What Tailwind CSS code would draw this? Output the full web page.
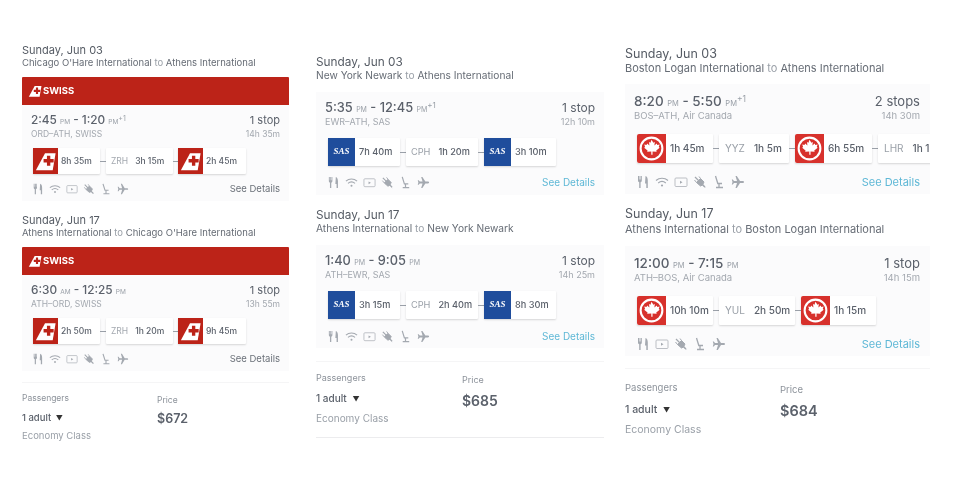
<!DOCTYPE html>
<html lang="en">
<head>
  <meta charset="UTF-8">
  <meta name="viewport" content="width=device-width, initial-scale=1.0">
  <title>Flights</title>
  <script src="https://cdn.jsdelivr.net/npm/@tailwindcss/browser@4"></script>
</head>
<body class="bg-white">
  <svg class="hidden">
    <symbol id="fork" viewBox="0 0 14 14"><path d="M2 1v4.500c0 1 .6 1.600 1.200 1.800V13h1.400V7.300c.6-.2 1.200-.8 1.200-1.800V1H5v3.500h-.5V1h-1v3.500H3V1zM9.500 1c1.500.5 2.300 2.200 2.300 4.500V13h-1.500V8.500H9z" fill="#a4a9b0"/></symbol>
    <symbol id="wifi" viewBox="0 0 14 14"><path d="M1 5.500c3.400-3 8.600-3 12 0M3.200 8c2.200-1.900 5.400-1.900 7.600 0" fill="none" stroke="#a4a9b0" stroke-width="1.200"/><circle cx="7" cy="10.500" r="1.100" fill="#a4a9b0"/></symbol>
    <symbol id="screen" viewBox="0 0 14 14"><rect x="1" y="3" width="12" height="8.500" rx="1" fill="none" stroke="#b4b8be" stroke-width=".9"/><path d="M6 5.800l2.500 1.500L6 8.800z" fill="#a4a9b0"/></symbol>
    <symbol id="plug" viewBox="0 0 14 14"><path d="M2 2l10 10" stroke="#a4a9b0" stroke-width="1.300"/><path d="M3.500 7.500L7.500 3.500l3.500 3.500-1.500 3-2 1zM3.500 7.500L1.500 5M7.500 3.500L6 1.500M9.500 10l2.500 2.500" fill="#a4a9b0" stroke="#a4a9b0"/></symbol>
    <symbol id="seat" viewBox="0 0 14 14"><path d="M3.500 1l2.300 7.500h4.200M7 8.500V12M4 12.500h7" fill="none" stroke="#a4a9b0" stroke-width="1.300"/></symbol>
    <symbol id="plane" viewBox="0 0 14 14"><path d="M13 7c0-.7-.7-1-1.300-1H9L5.800 1H4.500L6 6H3L1.800 4.500H.8L1.500 7 .8 9.500h1L3 8h3l-1.500 5h1.300L9 8h2.700c.6 0 1.300-.3 1.300-1z" fill="#a4a9b0"/></symbol>
    <symbol id="swiss" viewBox="0 0 26 26"><path d="M3 22.500L12.500 5h11l-3 17.500z" fill="#fff"/><path d="M14.500 7.500h3.500v3.500h3.500v3.500h-3.500v3.500h-3.500v-3.500h-3.500v-3.500h3.500z" fill="#bc2318"/></symbol>
    <symbol id="maple" viewBox="0 0 28 28"><circle cx="14" cy="14" r="10.500" fill="none" stroke="#fff" stroke-width="2"/><path d="M14 5.500l1.800 3 1.400-.7-.4 3.400 2.200-2.100.6 1.400 2.200-.3-.8 2.400.9.600-3.300 2.700.4 1.300-4-.4V20h-1.200v-3.200l-4 .4.400-1.300-3.300-2.700.9-.6-.8-2.400 2.200.3.600-1.400 2.200 2.100-.4-3.400 1.400.7z" fill="#fff"/></symbol>
  </svg>

  <div class="w-[960px] h-[498px] overflow-hidden flex whitespace-nowrap text-[#5b616b] blur-[0.3px] [font-family:Inter,'Liberation_Sans',sans-serif]">

    <!-- swiss -->
    <div class="w-[267px] ml-[22px] pt-[43px] shrink-0">
      <p class="text-[11px] leading-[14px] text-[#555b64]">Sunday, Jun 03</p>
      <p class="text-[9.500px] leading-[13px] text-[#666c75] mt-[-1px]">Chicago O'Hare International <span class="text-[#9aa0a8]">to</span> Athens International</p>
      <div class="mt-[8px] h-[28px] bg-[#bc2318] rounded-t-[1px] flex items-center pl-[5px] text-white font-bold text-[9.500px]">
        <svg class="w-[16px] h-[16px]"><use href="#swiss"/></svg>SWISS
      </div>
      <div class="h-[96px] bg-[#fbfbfc] px-[9px] pt-[8px]">
        <div class="flex justify-between">
          <p class="text-[11.800px] leading-[15px] font-medium">2:45 <span class="text-[6.500px] font-normal text-[#9aa0a8]">PM</span> - 1:20 <span class="text-[6.500px] font-normal text-[#9aa0a8]">PM<sup class="text-[7px]">+1</sup></span></p>
          <p class="text-[11px] leading-[15px]">1 stop</p>
        </div>
        <div class="flex justify-between text-[8.500px] leading-[12px] text-[#a3a8af] mt-[-2px]">
          <p>ORD–ATH, SWISS</p><p>14h 35m</p>
        </div>
        <div class="flex items-center mt-[8px] pl-[2px] text-[8.500px] font-medium h-[26px]">
          <div class="w-[67px] h-[26px] bg-white shadow-[0_1px_2px_#00000026] flex items-center rounded-[1px]"><div class="w-[25px] h-[26px] bg-[#bc2318]"><svg class="w-[25px] h-[26px]"><use href="#swiss"/></svg></div><span class="ml-[3px]">8h 35m</span></div>
          <div class="w-[6px] h-px bg-[#9aa0a8]"></div>
          <div class="w-[67px] h-[26px] bg-white shadow-[0_1px_2px_#00000026] flex items-center px-[5px] gap-[7px] rounded-[1px]"><span class="font-normal text-[#a3a8af]">ZRH</span><span>3h 15m</span></div>
          <div class="w-[5px] h-px bg-[#9aa0a8]"></div>
          <div class="w-[68px] h-[26px] bg-white shadow-[0_1px_2px_#00000026] flex items-center rounded-[1px]"><div class="w-[25px] h-[26px] bg-[#bc2318]"><svg class="w-[25px] h-[26px]"><use href="#swiss"/></svg></div><span class="ml-[3px]">2h 45m</span></div>
        </div>
        <div class="flex items-center justify-between mt-[8px] pl-[1px]">
          <div class="flex gap-[5px]"><svg class="w-[12px] h-[12px]"><use href="#fork"/></svg><svg class="w-[12px] h-[12px]"><use href="#wifi"/></svg><svg class="w-[12px] h-[12px]"><use href="#screen"/></svg><svg class="w-[12px] h-[12px]"><use href="#plug"/></svg><svg class="w-[12px] h-[12px]"><use href="#seat"/></svg><svg class="w-[12px] h-[12px]"><use href="#plane"/></svg></div>
          <span class="text-[9.500px] text-[#6b7179]">See Details</span>
        </div>
      </div>

      <p class="text-[11px] leading-[14px] text-[#555b64] mt-[12px]">Sunday, Jun 17</p>
      <p class="text-[9.500px] leading-[13px] text-[#666c75] mt-[-1px]">Athens International <span class="text-[#9aa0a8]">to</span> Chicago O'Hare International</p>
      <div class="mt-[8px] h-[28px] bg-[#bc2318] rounded-t-[1px] flex items-center pl-[5px] text-white font-bold text-[9.500px]">
        <svg class="w-[16px] h-[16px]"><use href="#swiss"/></svg>SWISS
      </div>
      <div class="h-[96px] bg-[#fbfbfc] px-[9px] pt-[8px]">
        <div class="flex justify-between">
          <p class="text-[11.800px] leading-[15px] font-medium">6:30 <span class="text-[6.500px] font-normal text-[#9aa0a8]">AM</span> - 12:25 <span class="text-[6.500px] font-normal text-[#9aa0a8]">PM</span></p>
          <p class="text-[11px] leading-[15px]">1 stop</p>
        </div>
        <div class="flex justify-between text-[8.500px] leading-[12px] text-[#a3a8af] mt-[-2px]">
          <p>ATH–ORD, SWISS</p><p>13h 55m</p>
        </div>
        <div class="flex items-center mt-[8px] pl-[2px] text-[8.500px] font-medium h-[26px]">
          <div class="w-[67px] h-[26px] bg-white shadow-[0_1px_2px_#00000026] flex items-center rounded-[1px]"><div class="w-[25px] h-[26px] bg-[#bc2318]"><svg class="w-[25px] h-[26px]"><use href="#swiss"/></svg></div><span class="ml-[3px]">2h 50m</span></div>
          <div class="w-[6px] h-px bg-[#9aa0a8]"></div>
          <div class="w-[67px] h-[26px] bg-white shadow-[0_1px_2px_#00000026] flex items-center px-[5px] gap-[7px] rounded-[1px]"><span class="font-normal text-[#a3a8af]">ZRH</span><span>1h 20m</span></div>
          <div class="w-[5px] h-px bg-[#9aa0a8]"></div>
          <div class="w-[68px] h-[26px] bg-white shadow-[0_1px_2px_#00000026] flex items-center rounded-[1px]"><div class="w-[25px] h-[26px] bg-[#bc2318]"><svg class="w-[25px] h-[26px]"><use href="#swiss"/></svg></div><span class="ml-[3px]">9h 45m</span></div>
        </div>
        <div class="flex items-center justify-between mt-[8px] pl-[1px]">
          <div class="flex gap-[5px]"><svg class="w-[12px] h-[12px]"><use href="#fork"/></svg><svg class="w-[12px] h-[12px]"><use href="#wifi"/></svg><svg class="w-[12px] h-[12px]"><use href="#screen"/></svg><svg class="w-[12px] h-[12px]"><use href="#plug"/></svg><svg class="w-[12px] h-[12px]"><use href="#seat"/></svg><svg class="w-[12px] h-[12px]"><use href="#plane"/></svg></div>
          <span class="text-[9.500px] text-[#6b7179]">See Details</span>
        </div>
      </div>

      <div class="mt-[11px] h-px bg-[#f5f5f6]"></div>
      <div class="flex mt-[9px]">
        <div class="w-[135px]">
          <p class="text-[8.500px] leading-[12px] text-[#8d939b]">Passengers</p>
          <p class="text-[9.500px] leading-[13px] font-medium mt-[7px]">1 adult <span class="text-[7px] ml-[2px] text-[#333]">▼</span></p>
          <p class="text-[9.500px] leading-[13px] text-[#9aa0a8] mt-[4px]">Economy Class</p>
        </div>
        <div class="pt-[2px]">
          <p class="text-[8.500px] leading-[12px] text-[#8d939b]">Price</p>
          <p class="text-[12.500px] leading-[16px] font-semibold mt-[5px]">$672</p>
        </div>
      </div>
    </div>

    <!-- sas -->
    <div class="w-[288px] ml-[27px] pt-[55px] shrink-0">
      <p class="text-[11.800px] leading-[15px] text-[#555b64]">Sunday, Jun 03</p>
      <p class="text-[10.200px] leading-[13px] text-[#666c75] mt-[-1px]">New York Newark <span class="text-[#9aa0a8]">to</span> Athens International</p>
      <div class="h-[103px] bg-[#fbfbfc] px-[9px] pt-[8px] mt-[10px]">
        <div class="flex justify-between">
          <p class="text-[12.800px] leading-[16px] font-medium">5:35 <span class="text-[7px] font-normal text-[#9aa0a8]">PM</span> - 12:45 <span class="text-[7px] font-normal text-[#9aa0a8]">PM<sup class="text-[8px]">+1</sup></span></p>
          <p class="text-[12px] leading-[16px]">1 stop</p>
        </div>
        <div class="flex justify-between text-[9px] leading-[13px] text-[#a3a8af] mt-[-3px]">
          <p>EWR–ATH, SAS</p><p>12h 10m</p>
        </div>
        <div class="flex items-center mt-[10px] pl-[3px] text-[9.200px] font-medium h-[28px]">
          <div class="w-[72px] h-[28px] bg-white shadow-[0_1px_2px_#00000026] flex items-center rounded-[1px]"><div class="w-[27px] h-[28px] bg-[#1f4d9c] flex items-center justify-center text-white italic font-bold text-[9px] [font-family:'Liberation_Serif',serif]">SAS</div><span class="ml-[4px]">7h 40m</span></div>
          <div class="w-[6px] h-px bg-[#9aa0a8]"></div>
          <div class="w-[72px] h-[28px] bg-white shadow-[0_1px_2px_#00000026] flex items-center px-[5px] gap-[8px] rounded-[1px]"><span class="font-normal text-[#9aa0a8]">CPH</span><span>1h 20m</span></div>
          <div class="w-[6px] h-px bg-[#9aa0a8]"></div>
          <div class="w-[72px] h-[28px] bg-white shadow-[0_1px_2px_#00000026] flex items-center rounded-[1px]"><div class="w-[27px] h-[28px] bg-[#1f4d9c] flex items-center justify-center text-white italic font-bold text-[9px] [font-family:'Liberation_Serif',serif]">SAS</div><span class="ml-[4px]">3h 10m</span></div>
        </div>
        <div class="flex items-center justify-between mt-[9px] pl-[2px]">
          <div class="flex gap-[5px]"><svg class="w-[13px] h-[13px]"><use href="#fork"/></svg><svg class="w-[13px] h-[13px]"><use href="#wifi"/></svg><svg class="w-[13px] h-[13px]"><use href="#screen"/></svg><svg class="w-[13px] h-[13px]"><use href="#plug"/></svg><svg class="w-[13px] h-[13px]"><use href="#seat"/></svg><svg class="w-[13px] h-[13px]"><use href="#plane"/></svg></div>
          <span class="text-[10px] text-[#5fb8d6]">See Details</span>
        </div>
      </div>

      <p class="text-[11.800px] leading-[15px] text-[#555b64] mt-[13px]">Sunday, Jun 17</p>
      <p class="text-[10.200px] leading-[13px] text-[#666c75] mt-[-1px]">Athens International <span class="text-[#9aa0a8]">to</span> New York Newark</p>
      <div class="h-[103px] bg-[#fbfbfc] px-[9px] pt-[8px] mt-[10px]">
        <div class="flex justify-between">
          <p class="text-[12.800px] leading-[16px] font-medium">1:40 <span class="text-[7px] font-normal text-[#9aa0a8]">PM</span> - 9:05 <span class="text-[7px] font-normal text-[#9aa0a8]">PM</span></p>
          <p class="text-[12px] leading-[16px]">1 stop</p>
        </div>
        <div class="flex justify-between text-[9px] leading-[13px] text-[#a3a8af] mt-[-3px]">
          <p>ATH–EWR, SAS</p><p>14h 25m</p>
        </div>
        <div class="flex items-center mt-[10px] pl-[3px] text-[9.200px] font-medium h-[28px]">
          <div class="w-[72px] h-[28px] bg-white shadow-[0_1px_2px_#00000026] flex items-center rounded-[1px]"><div class="w-[27px] h-[28px] bg-[#1f4d9c] flex items-center justify-center text-white italic font-bold text-[9px] [font-family:'Liberation_Serif',serif]">SAS</div><span class="ml-[4px]">3h 15m</span></div>
          <div class="w-[6px] h-px bg-[#9aa0a8]"></div>
          <div class="w-[72px] h-[28px] bg-white shadow-[0_1px_2px_#00000026] flex items-center px-[5px] gap-[8px] rounded-[1px]"><span class="font-normal text-[#9aa0a8]">CPH</span><span>2h 40m</span></div>
          <div class="w-[6px] h-px bg-[#9aa0a8]"></div>
          <div class="w-[72px] h-[28px] bg-white shadow-[0_1px_2px_#00000026] flex items-center rounded-[1px]"><div class="w-[27px] h-[28px] bg-[#1f4d9c] flex items-center justify-center text-white italic font-bold text-[9px] [font-family:'Liberation_Serif',serif]">SAS</div><span class="ml-[4px]">8h 30m</span></div>
        </div>
        <div class="flex items-center justify-between mt-[10px] pl-[2px]">
          <div class="flex gap-[5px]"><svg class="w-[13px] h-[13px]"><use href="#fork"/></svg><svg class="w-[13px] h-[13px]"><use href="#wifi"/></svg><svg class="w-[13px] h-[13px]"><use href="#screen"/></svg><svg class="w-[13px] h-[13px]"><use href="#plug"/></svg><svg class="w-[13px] h-[13px]"><use href="#seat"/></svg><svg class="w-[13px] h-[13px]"><use href="#plane"/></svg></div>
          <span class="text-[10px] text-[#5fb8d6]">See Details</span>
        </div>
      </div>

      <div class="mt-[13px] h-px bg-[#f5f5f6]"></div>
      <div class="flex mt-[10px]">
        <div class="w-[146px]">
          <p class="text-[9px] leading-[12px] text-[#8d939b]">Passengers</p>
          <p class="text-[10px] leading-[14px] font-medium mt-[7px]">1 adult <span class="text-[7px] ml-[3px] text-[#333]">▼</span></p>
          <p class="text-[10px] leading-[14px] text-[#9aa0a8] mt-[4px]">Economy Class</p>
        </div>
        <div class="pt-[2px]">
          <p class="text-[9px] leading-[12px] text-[#8d939b]">Price</p>
          <p class="text-[14px] leading-[16px] font-semibold mt-[7px]">$685</p>
        </div>
      </div>
      <div class="mt-[12px] h-px bg-[#ececee]"></div>
    </div>

    <!-- air canada -->
    <div class="w-[305px] ml-[21px] pt-[46px] shrink-0 overflow-hidden">
      <p class="text-[12.500px] leading-[15px] text-[#555b64]">Sunday, Jun 03</p>
      <p class="text-[11px] leading-[14px] text-[#666c75]">Boston Logan International <span class="text-[#9aa0a8]">to</span> Athens International</p>
      <div class="h-[110px] bg-[#fbfbfc] pl-[9px] pt-[9px] mt-[9px] overflow-hidden">
        <div class="flex justify-between pr-[10px]">
          <p class="text-[13.500px] leading-[17px] font-medium">8:20 <span class="text-[7.500px] font-normal text-[#9aa0a8]">PM</span> - 5:50 <span class="text-[7.500px] font-normal text-[#9aa0a8]">PM<sup class="text-[8.500px]">+1</sup></span></p>
          <p class="text-[13px] leading-[17px]">2 stops</p>
        </div>
        <div class="flex justify-between pr-[10px] text-[9.500px] leading-[13px] text-[#a3a8af] mt-[-3px]">
          <p>BOS–ATH, Air Canada</p><p>14h 30m</p>
        </div>
        <div class="flex items-center mt-[12px] pl-[3px] text-[10px] font-medium h-[29px]">
          <div class="w-[76px] h-[29px] bg-white shadow-[0_1px_2px_#00000026] flex items-center rounded-[1px] shrink-0"><div class="w-[29px] h-[29px] bg-[#d7312c] rounded-l-[2px]"><svg class="w-[29px] h-[29px]"><use href="#maple"/></svg></div><span class="ml-[4px]">1h 45m</span></div>
          <div class="w-[6px] h-px bg-[#9aa0a8] shrink-0"></div>
          <div class="w-[70px] h-[29px] bg-white shadow-[0_1px_2px_#00000026] flex items-center px-[6px] gap-[9px] rounded-[1px] shrink-0"><span class="font-normal text-[#9aa0a8]">YYZ</span><span>1h 5m</span></div>
          <div class="w-[6px] h-px bg-[#9aa0a8] shrink-0"></div>
          <div class="w-[77px] h-[29px] bg-white shadow-[0_1px_2px_#00000026] flex items-center rounded-[1px] shrink-0"><div class="w-[29px] h-[29px] bg-[#d7312c] rounded-l-[2px]"><svg class="w-[29px] h-[29px]"><use href="#maple"/></svg></div><span class="ml-[4px]">6h 55m</span></div>
          <div class="w-[6px] h-px bg-[#9aa0a8] shrink-0"></div>
          <div class="w-[72px] h-[29px] bg-white shadow-[0_1px_2px_#00000026] flex items-center px-[6px] gap-[9px] rounded-[1px] shrink-0"><span class="font-normal text-[#9aa0a8]">LHR</span><span>1h 10m</span></div>
        </div>
        <div class="flex items-center justify-between mt-[11px] pl-[2px] pr-[10px]">
          <div class="flex gap-[5px]"><svg class="w-[14px] h-[14px]"><use href="#fork"/></svg><svg class="w-[14px] h-[14px]"><use href="#wifi"/></svg><svg class="w-[14px] h-[14px]"><use href="#screen"/></svg><svg class="w-[14px] h-[14px]"><use href="#plug"/></svg><svg class="w-[14px] h-[14px]"><use href="#seat"/></svg><svg class="w-[14px] h-[14px]"><use href="#plane"/></svg></div>
          <span class="text-[11px] text-[#5fb8d6]">See Details</span>
        </div>
      </div>

      <p class="text-[12.500px] leading-[15px] text-[#555b64] mt-[12px]">Sunday, Jun 17</p>
      <p class="text-[11px] leading-[14px] text-[#666c75] mt-[1px]">Athens International <span class="text-[#9aa0a8]">to</span> Boston Logan International</p>
      <div class="h-[110px] bg-[#fbfbfc] pl-[9px] pt-[9px] mt-[10px] overflow-hidden">
        <div class="flex justify-between pr-[10px]">
          <p class="text-[13.500px] leading-[17px] font-medium">12:00 <span class="text-[7.500px] font-normal text-[#9aa0a8]">PM</span> - 7:15 <span class="text-[7.500px] font-normal text-[#9aa0a8]">PM</span></p>
          <p class="text-[13px] leading-[17px]">1 stop</p>
        </div>
        <div class="flex justify-between pr-[10px] text-[9.500px] leading-[13px] text-[#a3a8af] mt-[-3px]">
          <p>ATH–BOS, Air Canada</p><p>14h 15m</p>
        </div>
        <div class="flex items-center mt-[12px] pl-[3px] text-[10px] font-medium h-[29px]">
          <div class="w-[76px] h-[29px] bg-white shadow-[0_1px_2px_#00000026] flex items-center rounded-[1px] shrink-0"><div class="w-[29px] h-[29px] bg-[#d7312c] rounded-l-[2px]"><svg class="w-[29px] h-[29px]"><use href="#maple"/></svg></div><span class="ml-[4px]">10h 10m</span></div>
          <div class="w-[6px] h-px bg-[#9aa0a8] shrink-0"></div>
          <div class="w-[76px] h-[29px] bg-white shadow-[0_1px_2px_#00000026] flex items-center px-[6px] gap-[9px] rounded-[1px] shrink-0"><span class="font-normal text-[#9aa0a8]">YUL</span><span>2h 50m</span></div>
          <div class="w-[6px] h-px bg-[#9aa0a8] shrink-0"></div>
          <div class="w-[75px] h-[29px] bg-white shadow-[0_1px_2px_#00000026] flex items-center rounded-[1px] shrink-0"><div class="w-[29px] h-[29px] bg-[#d7312c] rounded-l-[2px]"><svg class="w-[29px] h-[29px]"><use href="#maple"/></svg></div><span class="ml-[4px]">1h 15m</span></div>
        </div>
        <div class="flex items-center justify-between mt-[11px] pl-[2px] pr-[10px]">
          <div class="flex gap-[5px]"><svg class="w-[14px] h-[14px]"><use href="#fork"/></svg><svg class="w-[14px] h-[14px]"><use href="#screen"/></svg><svg class="w-[14px] h-[14px]"><use href="#plug"/></svg><svg class="w-[14px] h-[14px]"><use href="#seat"/></svg><svg class="w-[14px] h-[14px]"><use href="#plane"/></svg></div>
          <span class="text-[11px] text-[#5fb8d6]">See Details</span>
        </div>
      </div>

      <div class="mt-[12px] h-px bg-[#f5f5f6]"></div>
      <div class="flex mt-[12px]">
        <div class="w-[155px]">
          <p class="text-[9.500px] leading-[13px] text-[#8d939b]">Passengers</p>
          <p class="text-[10.500px] leading-[14px] font-medium mt-[9px]">1 adult <span class="text-[7px] ml-[3px] text-[#333]">▼</span></p>
          <p class="text-[10.500px] leading-[14px] text-[#9aa0a8] mt-[5px]">Economy Class</p>
        </div>
        <div class="pt-[2px]">
          <p class="text-[9.500px] leading-[13px] text-[#8d939b]">Price</p>
          <p class="text-[14.500px] leading-[18px] font-semibold mt-[6px]">$684</p>
        </div>
      </div>
    </div>

  </div>
</body>
</html>
